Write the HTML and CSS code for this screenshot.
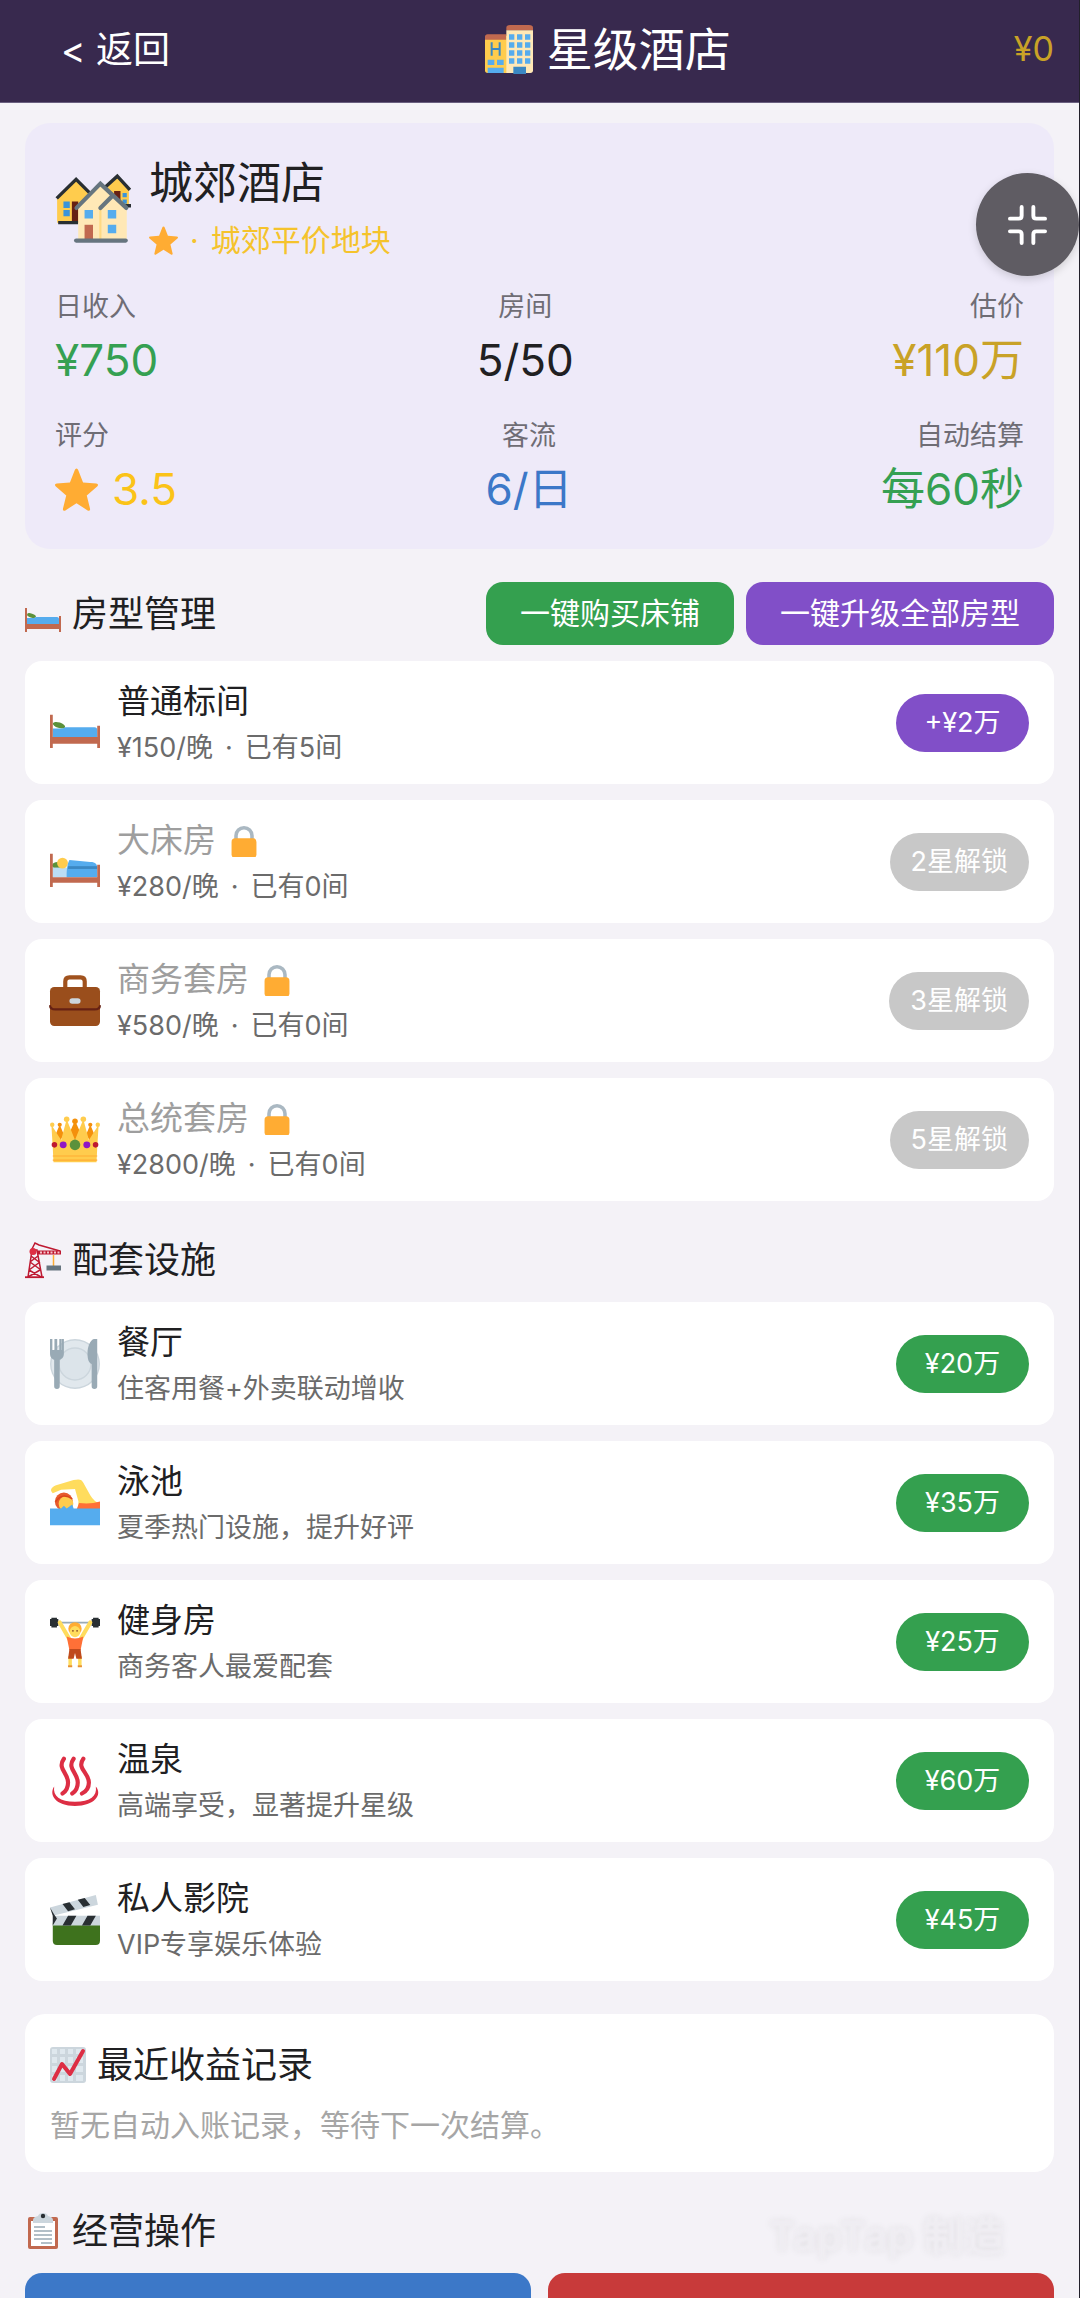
FILE: index.html
```html
<!DOCTYPE html>
<html lang="zh-CN">
<head>
    <meta charset="UTF-8">
    <meta name="viewport" content="width=device-width, initial-scale=1.0">
    <title>星级酒店</title>
    <link rel="stylesheet" href="styles.css">
</head>
<body>
    <!-- shared icons -->
    <svg class="sprite" aria-hidden="true">
        <symbol id="i-bed" viewBox="0 0 36 36">
            <ellipse cx="6.5" cy="19.6" rx="4.6" ry="2" transform="rotate(18 6.5 19.6)" fill="#5c913b"/>
            <path d="M2 22h7l2-1h21c1.500 0 2 1 2 2v5H2z" fill="#55acee"/>
            <path d="M0 12h2v24H0zM34 20h2v16h-2zM1 28h34v5H1z" fill="#c1694f"/>
        </symbol>
        <symbol id="i-sleep" viewBox="0 0 36 36">
            <ellipse cx="5.500" cy="20.500" rx="4" ry="2.500" fill="#5c913b"/>
            <path d="M2 22h12v7H2z" fill="#bbddf5"/>
            <circle cx="9" cy="18.800" r="3.900" fill="#ffcc4d"/>
            <path d="M14 16.500l15 1.500c4 0 5 2 5 4v7H12c0-4 0-9 2-12.500z" fill="#55acee"/>
            <path d="M13 21h21v2H13z" fill="#3b88c3"/>
            <path d="M0 12h2v24H0zM34 20h2v16h-2zM1 29h34v4H1z" fill="#c1694f"/>
        </symbol>
        <symbol id="i-lock" viewBox="0 0 36 36">
            <path d="M9 18v-6a9 9 0 0 1 18 0v6" fill="none" stroke="#aab8c2" stroke-width="4"/>
            <rect x="4" y="15" width="28" height="22" rx="4" fill="#ffac33"/>
        </symbol>
        <symbol id="i-star" viewBox="0 0 36 36">
            <path d="M18 .500q1 0 1.500 1.300l4 10.400 11 .8c1.600.2 2 1.500.8 2.500l-8.700 7.600 2.700 10.900c.4 1.600-.8 2.300-2 1.500L18 29.500l-9.300 6c-1.200.8-2.400.1-2-1.500l2.700-10.900-8.700-7.600c-1.200-1-.8-2.300.8-2.500l11-.8 4-10.400Q17 .500 18 .500z" fill="#ffac33"/>
        </symbol>
    </svg>

    <div class="app">
        <header class="topbar">
            <button class="back" type="button">&lt; 返回</button>
            <h1 class="title">
                <svg class="emoji" viewBox="0 0 36 36">
                    <rect y="8" width="18" height="28" rx="2" fill="#ffcc4d"/>
                    <path d="M0 11V9q0-2 2-2h14v4zM16 4V2q0-2 3-2h14q3 0 3 2v2z" fill="#c1694f"/>
                    <path d="M16 4h20v30q0 2-2 2H16z" fill="#ffe8b6"/>
                    <path d="M2 32h12v4H2zM2 26h5v4H2zM9 26h5v4H9zM18 7h4v4h-4zM24 7h4v4h-4zM30 7h4v4h-4zM18 13h4v4h-4zM24 13h4v4h-4zM30 13h4v4h-4zM18 19h4v4h-4zM24 19h4v4h-4zM30 19h4v4h-4zM18 25h4v4h-4zM24 25h4v4h-4zM30 25h4v4h-4z" fill="#55acee"/>
                    <path d="M5 13v10M11 13v10M5 18h6M22 32h8v4h-8z" fill="#3b88c3" stroke="#3b88c3" stroke-width="1.500"/>
                </svg>
                星级酒店
            </h1>
            <span class="money">¥0</span>
        </header>

        <main class="content">
            <section class="hotel">
                <div class="hotel-head">
                    <svg class="hotel-icon" viewBox="0 0 36 36">
                        <path d="M1 13L10 4l9 9v11H1z" fill="#ffcc4d"/>
                        <path d="M24 8l6-6 5 6v8H24z" fill="#ffcc4d"/>
                        <path d="M8 14h3v10H8zM28 9h3v5h-3z" fill="#662113"/>
                        <path d="M4 14h3v3H4zM4 18h3v3H4zM32 10h2v2h-2zM32 13h2v2h-2z" fill="#3b94d9"/>
                        <path d="M.800 12.500L10 3.500l7 7M24 7l5.500-5 6 6.500M1.500 24H11M31 16h5" fill="none" stroke="#292f33" stroke-width="1.600"/>
                        <path d="M11 16L21.500 6 34 17v15H11z" fill="#ffe8b6"/>
                        <path d="M21.500 16v16" stroke="#ffd983"/>
                        <path d="M10.200 17L21.500 5.500 33.800 17M21.500 17l6-6" fill="none" stroke="#66757f" stroke-width="2" stroke-linecap="round"/>
                        <path d="M14 18h4v4h-4zM25 18h4v4h-4zM25 25h4v4h-4z" fill="#55acee"/>
                        <path d="M14 25h4v7h-4z" fill="#c1694f"/>
                        <path d="M10 32.500h23.500" stroke="#66757f" stroke-width="2" stroke-linecap="round"/>
                    </svg>
                    <div>
                        <h2 class="hotel-name">城郊酒店</h2>
                        <p class="hotel-sub"><svg class="star-sm"><use href="#i-star"/></svg><span class="dot">·</span>城郊平价地块</p>
                    </div>
                </div>
                <div class="stats">
                    <div class="stat"><span class="label">日收入</span><span class="value green">¥750</span></div>
                    <div class="stat center"><span class="label">房间</span><span class="value">5/50</span></div>
                    <div class="stat right"><span class="label">估价</span><span class="value gold">¥110万</span></div>
                </div>
                <div class="stats">
                    <div class="stat"><span class="label">评分</span><span class="value yellow"><svg class="star-lg"><use href="#i-star"/></svg>3.5</span></div>
                    <div class="stat center"><span class="label">客流</span><span class="value blue">6/日</span></div>
                    <div class="stat right"><span class="label">自动结算</span><span class="value green">每60秒</span></div>
                </div>
            </section>

            <div class="section-head">
                <h2><svg class="emoji"><use href="#i-bed"/></svg>房型管理</h2>
                <div class="bulk">
                    <button class="bulk-btn bg-green" type="button">一键购买床铺</button>
                    <button class="bulk-btn bg-purple" type="button">一键升级全部房型</button>
                </div>
            </div>
            <div class="list">
                <div class="row">
                    <svg class="row-icon"><use href="#i-bed"/></svg>
                    <div class="info"><h3>普通标间</h3><p>¥150/晚<span class="dot">·</span>已有5间</p></div>
                    <button class="pill bg-purple" type="button">+¥2万</button>
                </div>
                <div class="row locked">
                    <svg class="row-icon"><use href="#i-sleep"/></svg>
                    <div class="info"><h3>大床房<svg class="lock"><use href="#i-lock"/></svg></h3><p>¥280/晚<span class="dot">·</span>已有0间</p></div>
                    <button class="pill" type="button" disabled>2星解锁</button>
                </div>
                <div class="row locked">
                    <svg class="row-icon" viewBox="0 0 36 36">
                        <path d="M11 9V4q0-3 3-3h8q3 0 3 3v5" fill="none" stroke="#a0521e" stroke-width="3"/>
                        <rect y="8" width="36" height="28" rx="3" fill="#9a4e1c"/>
                        <path d="M0 21q0 3 4 3h28q4 0 4-3" fill="none" stroke="#662113" stroke-width="1.500"/>
                        <rect x="14" y="16" width="8" height="4" rx="2" fill="#ccd6dd"/>
                    </svg>
                    <div class="info"><h3>商务套房<svg class="lock"><use href="#i-lock"/></svg></h3><p>¥580/晚<span class="dot">·</span>已有0间</p></div>
                    <button class="pill" type="button" disabled>3星解锁</button>
                </div>
                <div class="row locked">
                    <svg class="row-icon" viewBox="0 0 36 36">
                        <path d="M7 7l3 7-3 5-3-5zM18 4l4 9-4 7-4-7zM29 7l3 7-3 5-3-5z" fill="#f4900c"/>
                        <circle cx="7" cy="7" r="1.500" fill="#f4900c"/><circle cx="18" cy="4.500" r="2" fill="#f4900c"/><circle cx="29" cy="7" r="1.500" fill="#f4900c"/>
                        <path d="M2.500 34L2 24 1 7l5 8 2 3 4-15 6 15 6-15 4 15 2-3 5-8-1 17-.500 10z" fill="#ffcc4d"/>
                        <g fill="#ffcc4d"><circle cx="1.600" cy="7" r="1.600"/><circle cx="12" cy="3" r="2"/><circle cx="24" cy="3" r="2"/><circle cx="34.400" cy="7" r="1.600"/></g>
                        <path d="M2 29.500h32M2 32.500h32" stroke="#ffac33" stroke-width=".8"/>
                        <g fill="#be1931"><circle cx="3.200" cy="21.500" r="2"/><circle cx="32.800" cy="21.500" r="2"/></g>
                        <g fill="#9016c5"><circle cx="9.500" cy="21.500" r="2.500"/><circle cx="26.500" cy="21.500" r="2.500"/></g>
                        <circle cx="18" cy="21.500" r="3.800" fill="#5c913b"/>
                    </svg>
                    <div class="info"><h3>总统套房<svg class="lock"><use href="#i-lock"/></svg></h3><p>¥2800/晚<span class="dot">·</span>已有0间</p></div>
                    <button class="pill" type="button" disabled>5星解锁</button>
                </div>
            </div>

            <div class="section-head">
                <h2>
                    <svg class="emoji" viewBox="0 0 36 36">
                        <path d="M3 35L7 8h5l5 27M4 28l11-8M16 28L5 20M6 14l8 6M13 14l-8 6M3 35l12-7M16 35L4 28M6 9l4-8 4 2 21 6" fill="none" stroke="#be1931" stroke-width="1.500"/>
                        <path d="M0 35.200h19" stroke="#be1931" stroke-width="1.800"/>
                        <circle cx="8" cy="9.500" r="3.500" fill="#dd2e44"/>
                        <path d="M13 8.500h23v4H13z" fill="#be1931"/>
                        <path d="M15 10.500h20" stroke="#f5c6cc" stroke-width="1.800" stroke-dasharray="2 1.500"/>
                        <path d="M28.500 13v11" stroke="#ffac33" stroke-width="1.500"/>
                        <path d="M21.500 23.500H36v5H21.500z" fill="#66757f"/>
                    </svg>配套设施
                </h2>
            </div>
            <div class="list">
                <div class="row">
                    <svg class="row-icon" viewBox="0 0 36 36">
                        <circle cx="18" cy="18" r="18" fill="#ccd6dd"/>
                        <circle cx="18" cy="18" r="17" fill="#e1e8ed"/>
                        <circle cx="18" cy="18" r="11.500" fill="#dce4ea" stroke="#ccd6dd"/>
                        <path d="M0 0h1.700v8h1.500V0h2v8h1.500V0h1.600v8h.2V0H10v10c0 3-1 4-3 5v19a2 2 0 0 1-4 0V15c-2-1-3-2-3-5zM34 0v34a2 2 0 0 1-4 0V18c-2-1-3-3-3-8 0-4 2-10 5-10z" fill="#99aab5"/>
                    </svg>
                    <div class="info"><h3>餐厅</h3><p>住客用餐+外卖联动增收</p></div>
                    <button class="pill bg-green" type="button">¥20万</button>
                </div>
                <div class="row">
                    <svg class="row-icon" viewBox="0 0 36 36">
                        <path d="M20 22l.500-5-2.500-9-10 .500-6 2.500c-3-3 0-5 3-6l12-3.500c4-1 6-.5 7 2l5 9q3 5 7 6v5z" fill="#ffdc5d"/>
                        <path d="M21 18q8 1 15-1v6H19z" fill="#ff7037"/>
                        <circle cx="10" cy="17" r="6.500" fill="#e75a2c"/>
                        <circle cx="11.500" cy="18.500" r="5.300" fill="#ffcc4d"/>
                        <path d="M4 17q5-7 12-2" fill="none" stroke="#d8451c"/>
                        <path d="M0 22h8l2-2 2 2 4-3 1 3h19v12H0z" fill="#55acee"/>
                    </svg>
                    <div class="info"><h3>泳池</h3><p>夏季热门设施，提升好评</p></div>
                    <button class="pill bg-green" type="button">¥35万</button>
                </div>
                <div class="row">
                    <svg class="row-icon" viewBox="0 0 36 36">
                        <path d="M4 4h28" stroke="#99aab5" stroke-width="1.200"/>
                        <path d="M1 .500h4v7H1zM31 .500h4v7h-4zM0 1.500h6v5H0zM30 1.500h6v5h-6z" fill="#292f33"/>
                        <path d="M7 4l7 12M29 4l-7 12" stroke="#ffdc5d" stroke-width="3" stroke-linecap="round"/>
                        <path d="M12 14q6 3 12 0l-2 10h-8z" fill="#ff7037"/>
                        <path d="M14.500 28v7M21.500 28v7" stroke="#ffdc5d" stroke-width="2.500"/>
                        <path d="M14 23h8l1 7h-4l-1-4-1 4h-4z" fill="#bf4a1d"/>
                        <circle cx="18" cy="8.500" r="4.800" fill="#ffac33"/>
                        <ellipse cx="18" cy="10.500" rx="3.800" ry="4" fill="#ffdc5d"/>
                        <path d="M16.500 9.500v1M19.500 9.500v1" stroke="#662113"/>
                        <path d="M13 35.500h3M20 35.500h3" stroke="#e8912d" stroke-width="1.500"/>
                    </svg>
                    <div class="info"><h3>健身房</h3><p>商务客人最爱配套</p></div>
                    <button class="pill bg-green" type="button">¥25万</button>
                </div>
                <div class="row">
                    <svg class="row-icon" viewBox="0 0 36 36">
                        <g fill="none" stroke="#dd2e44" stroke-width="3" stroke-linecap="round">
                            <path d="M10 2c-5 7 3 10 3 17 0 3-1 6-4 8M17 2c-5 7 3 10 3 17 0 3-1 6-4 8M24 2c-5 7 4 10 4 17 0 3-1 6-5 8"/>
                        </g>
                        <path d="M3 22C-1 28 4 36 18 36S38 28 33 22c1 7-4 11-15 11S2 29 3 22z" fill="#dd2e44"/>
                    </svg>
                    <div class="info"><h3>温泉</h3><p>高端享受，显著提升星级</p></div>
                    <button class="pill bg-green" type="button">¥60万</button>
                </div>
                <div class="row">
                    <svg class="row-icon" viewBox="0 0 36 36">
                        <path d="M2 20h34v13q0 3-3 3H5q-3 0-3-3z" fill="#3e721d"/>
                        <path d="M2 15h34v7H2zM0 9l33-9 1.500 7L2 15z" fill="#ccd6dd"/>
                        <path d="M0 9l2 6v7l3-5-2-3zM9 6.500l5-1.300 4 5-5 1.500zM20 3.500l5-1.300 4 5-5 1.500zM13 15h6l-4 7H9zM27 15h6l-4 7h-6z" fill="#292f33"/>
                    </svg>
                    <div class="info"><h3>私人影院</h3><p>VIP专享娱乐体验</p></div>
                    <button class="pill bg-green" type="button">¥45万</button>
                </div>
            </div>

            <section class="records">
                <h2>
                    <svg class="emoji" viewBox="0 0 36 36">
                        <rect width="36" height="36" rx="3" fill="#ccd6dd"/>
                        <path d="M2 2h5v5H2zM10 2h5v5h-5zM18 2h5v5h-5zM26 2h7v5h-7zM2 10h5v6H2zM10 10h5v6h-5zM18 10h5v6h-5zM26 10h7v6h-7zM2 19h5v6H2zM10 19h5v6h-5zM18 19h5v6h-5zM26 19h7v6h-7zM2 28h5v6H2zM10 28h5v6h-5zM18 28h5v6h-5zM26 28h7v6h-7z" fill="#dfe8ee"/>
                        <path d="M4 32l8-15 8 10L33 4" fill="none" stroke="#dd2e44" stroke-width="4" stroke-linecap="round" stroke-linejoin="round"/>
                    </svg>最近收益记录
                </h2>
                <p>暂无自动入账记录，等待下一次结算。</p>
            </section>

            <div class="section-head">
                <h2>
                    <svg class="emoji" viewBox="0 0 36 36">
                        <rect x="3" y="4" width="30" height="32" rx="2" fill="#c1694f"/>
                        <path d="M6 8h24v25H6z" fill="#fff"/>
                        <path d="M8 10V7q0-3 5-4 1-3 5-3t5 3q5 1 5 4v3z" fill="#ccd6dd"/>
                        <circle cx="18" cy="3" r="2.200" fill="#292f33"/>
                        <path d="M9 14h11M9 18h18M9 22h18M9 26h18M16 30h11" stroke="#99aab5" stroke-width="1.500"/>
                    </svg>经营操作
                </h2>
            </div>
            <div class="actions">
                <button class="action bg-blue" type="button">升级酒店</button>
                <button class="action bg-red" type="button">出售酒店</button>
            </div>
        </main>

        <button class="float-btn" type="button" aria-label="退出全屏">
            <svg viewBox="0 0 40 40">
                <path d="M2 14h9q3 0 3-3V2M26 2v9q0 3 3 3h9M2 27h9q3 0 3 3v9M26 39v-9q0-3 3-3h9" fill="none" stroke="#fff" stroke-width="4" stroke-linecap="round"/>
            </svg>
        </button>
        <div class="watermark">TapTap 制造</div>
    </div>
</body>
</html>
```

FILE: styles.css
```css
* {
    box-sizing: border-box;
}

body, h1, h2, h3, p {
    margin: 0;
    font-weight: 400;
}

body {
    font-family: Inter, "Noto Sans CJK SC", sans-serif;
    color: #202022;
    background: #f4f2f7;
}

button {
    font: inherit;
    border: none;
    cursor: pointer;
    color: #fff;
}

svg {
    display: block;
    flex: none;
    overflow: visible;
}

.sprite {
    position: absolute;
    width: 0;
    height: 0;
}

.app {
    position: relative;
    height: 100vh;
    overflow: hidden;
    display: flex;
    flex-direction: column;
    border-right: 1px solid #22202a;
}

/* top bar */
.topbar {
    display: flex;
    justify-content: space-between;
    align-items: center;
    height: 103px;
    padding: 0 25px 5px;
    flex: none;
    background: #38294e;
    border-bottom: 1px solid #6a5f80;
}

.back {
    background: none;
    padding: 0 36px 4px;
    font-size: 37px;
}

.title {
    display: flex;
    align-items: center;
    gap: 14px;
    padding-right: 4px;
    font-size: 46px;
    line-height: 60px;
    color: #fff;
}

.title .emoji {
    width: 48px;
    height: 48px;
}

.money {
    font-size: 34px;
    color: #c9a227;
}

.content {
    flex: 1;
    min-height: 0;
    overflow-y: auto;
    scrollbar-width: none;
    padding: 20px 25px;
}

/* hotel summary */
.hotel {
    padding: 30px;
    border-radius: 25px;
    background: #eeeaf9;
}

.hotel-head {
    display: flex;
    align-items: center;
    gap: 18px;
    margin-bottom: 17px;
}

.hotel-icon {
    width: 76px;
    height: 76px;
}

.hotel-name {
    font-size: 44px;
    line-height: 60px;
}

.hotel-sub {
    display: flex;
    align-items: center;
    font-size: 30px;
    line-height: 54px;
    color: #f5c32c;
}

.dot {
    margin: 0 12px;
}

.star-sm {
    width: 29px;
    height: 29px;
}

.star-lg {
    width: 43px;
    height: 43px;
}

.stats {
    display: flex;
    justify-content: space-between;
}

.stats + .stats {
    margin-top: 23px;
}

.stat {
    display: flex;
    flex-direction: column;
}

.center {
    align-items: center;
}

.right {
    align-items: flex-end;
}

.label {
    font-size: 27px;
    line-height: 46px;
    color: #6f6d75;
}

.value {
    display: flex;
    align-items: center;
    gap: 14px;
    font-size: 44px;
    line-height: 60px;
}

.green { color: #35a052; }
.gold { color: #c9a227; }
.yellow { color: #fbc318; }
.blue { color: #3c78c8; }

.bg-green { background: #34a04f; }
.bg-purple { background: #814fc8; }
.bg-blue { background: #3c78c8; }
.bg-red { background: #c83a3a; }

/* section titles */
.section-head {
    display: flex;
    justify-content: space-between;
    align-items: center;
    margin: 33px 0 16px;
}

.section-head h2, .records h2 {
    display: flex;
    align-items: center;
    gap: 11px;
    font-size: 36px;
    line-height: 52px;
}

.section-head .emoji, .records .emoji {
    width: 36px;
    height: 36px;
}

.bulk {
    display: flex;
    gap: 12px;
}

.bulk-btn {
    padding: 0 34px;
    border-radius: 17px;
    font-size: 30px;
    line-height: 63px;
}

/* room and facility rows */
.list {
    display: flex;
    flex-direction: column;
    gap: 16px;
}

.row {
    display: flex;
    align-items: center;
    gap: 17px;
    padding: 15px 25px;
    border-radius: 17px;
    background: #fff;
}

.row-icon {
    width: 50px;
    height: 50px;
}

.info {
    flex: 1;
}

.info h3 {
    display: flex;
    align-items: center;
    gap: 12px;
    font-size: 33px;
    line-height: 51px;
}

.info p {
    font-size: 27px;
    line-height: 42px;
    color: #6b6b6b;
}

.locked h3 {
    color: #9e9e9e;
}

.lock {
    width: 32px;
    height: 32px;
}

.pill {
    min-width: 133px;
    padding: 0 21px;
    border-radius: 29px;
    font-size: 27px;
    line-height: 58px;
}

.pill:disabled {
    background: #c8c8c8;
    color: #fff;
    cursor: default;
}

.records {
    margin-top: 33px;
    padding: 25px;
    border-radius: 20px;
    background: #fff;
}

.records p {
    margin-top: 12px;
    font-size: 30px;
    line-height: 44px;
    color: #a6a6a6;
}

.actions {
    display: grid;
    grid-template-columns: 1fr 1fr;
    gap: 17px;
}

.action {
    padding: 18px 0;
    border-radius: 17px;
    font-size: 30px;
    line-height: 44px;
}

/* floating overlays */
.float-btn {
    position: absolute;
    top: 173px;
    right: 0;
    width: 103px;
    height: 103px;
    padding: 32px;
    border-radius: 50%;
    background: #5f5c63;
    box-shadow: 0 3px 8px rgba(0, 0, 0, 0.15);
}

.watermark {
    position: absolute;
    right: 74px;
    bottom: 32px;
    font-size: 41px;
    font-weight: 700;
    line-height: 60px;
    color: #efedf2;
    text-shadow: 0 0 8px rgba(0, 0, 0, 0.08);
    filter: blur(1px);
    pointer-events: none;
}
```
